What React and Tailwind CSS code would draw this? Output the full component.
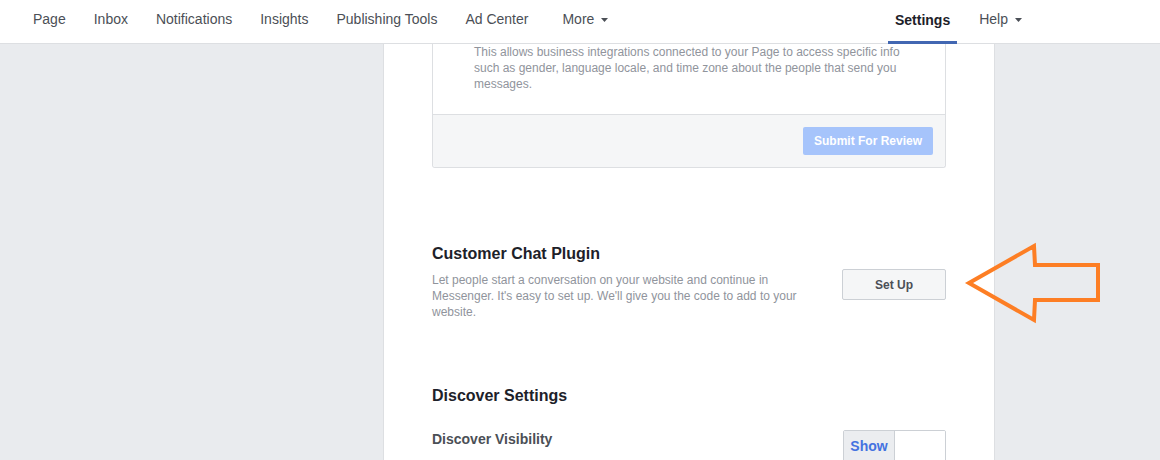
import React from 'react';

const Caret = () => (
  <svg width="7" height="4" viewBox="0 0 7 4" className="ml-[7px] mt-[1px]">
    <path d="M0 0 L7 0 L3.5 4 Z" fill="#4b4f56" />
  </svg>
);

const navItems = ['Page', 'Inbox', 'Notifications', 'Insights', 'Publishing Tools', 'Ad Center'];

const App = () => {
  return (
    <div className="relative min-h-[460px] bg-[#e9ebee] font-['Liberation_Sans',Arial,sans-serif] overflow-hidden">
      {/* Top nav */}
      <div className="flex h-[44px] items-stretch bg-white border-b border-[#dddfe2] text-[14px] text-[#4b4f56]">
        <div className="flex items-center gap-[28px] pl-[33px] pb-[4px]">
          {navItems.map((item) => (
            <span key={item} className="whitespace-nowrap">{item}</span>
          ))}
          <span className="ml-[6px] flex items-center whitespace-nowrap">
            More
            <Caret />
          </span>
        </div>
        <div className="ml-auto flex items-stretch mr-[138px]">
          <div className="flex items-center px-[7px] border-b-[3px] border-[#4267b2] font-bold text-[#1d2129] mb-[-1px]">
            <span>Settings</span>
          </div>
          <div className="flex items-center ml-[22px] pb-[4px]">
            Help
            <Caret />
          </div>
        </div>
      </div>

      {/* Main column */}
      <div className="ml-[383px] w-[612px] min-h-[416px] bg-white border-x border-[#dddfe2] px-[48px]">
        {/* Card (top scrolled off) */}
        <div className="border-x border-b border-[#dddfe2] rounded-b-[3px]">
          <p className="pl-[41px] pr-[30px] pb-[22px] text-[12px] leading-[16px] text-[#90949c]">
            This allows business integrations connected to your Page to access specific info such as gender, language locale, and time zone about the people that send you messages.
          </p>
          <div className="flex justify-end border-t border-[#dddfe2] bg-[#f5f6f7] px-[12px] py-[12px] rounded-b-[3px]">
            <div className="h-[28px] px-[11px] flex items-center rounded-[2px] bg-[#a6c4fb] text-white text-[12px] font-bold">
              Submit For Review
            </div>
          </div>
        </div>

        {/* Customer Chat Plugin */}
        <div className="mt-[76px]">
          <h2 className="text-[16px] leading-[20px] font-bold text-[#1d2129]">Customer Chat Plugin</h2>
          <div className="mt-[8px] flex items-start justify-between">
            <p className="w-[380px] text-[12px] leading-[16px] text-[#90949c]">
              Let people start a conversation on your website and continue in Messenger. It's easy to set up. We'll give you the code to add to your website.
            </p>
            <div className="mt-[-3px] w-[104px] h-[31px] flex items-center justify-center rounded-[2px] border border-[#ccd0d5] bg-[#f5f6f7] text-[12px] font-bold text-[#4b4f56]">
              Set Up
            </div>
          </div>
        </div>

        {/* Discover Settings */}
        <div className="mt-[66px]">
          <h2 className="text-[16px] leading-[20px] font-bold text-[#1d2129]">Discover Settings</h2>
          <div className="mt-[24px] flex items-start justify-between">
            <span className="text-[14px] leading-[18px] font-bold text-[#4b4f56]">Discover Visibility</span>
            <div className="flex w-[103px] h-[32px] rounded-[2px] border border-[#ccd0d5] overflow-hidden">
              <div className="w-[51px] flex items-center justify-center bg-[#ebedf0] border-r border-[#ccd0d5] text-[14px] font-bold text-[#4472e0]">
                Show
              </div>
              <div className="flex-1 bg-white" />
            </div>
          </div>
        </div>
      </div>

      {/* Annotation arrow */}
      <svg className="absolute left-0 top-0 pointer-events-none" width="1160" height="460">
        <polygon
          points="969,283 1034,246 1035,265 1098,265 1098,300 1035,300 1034,320"
          fill="none"
          stroke="#fd7e24"
          strokeWidth="4"
          strokeLinejoin="miter"
        />
      </svg>
    </div>
  );
};

export default App;
